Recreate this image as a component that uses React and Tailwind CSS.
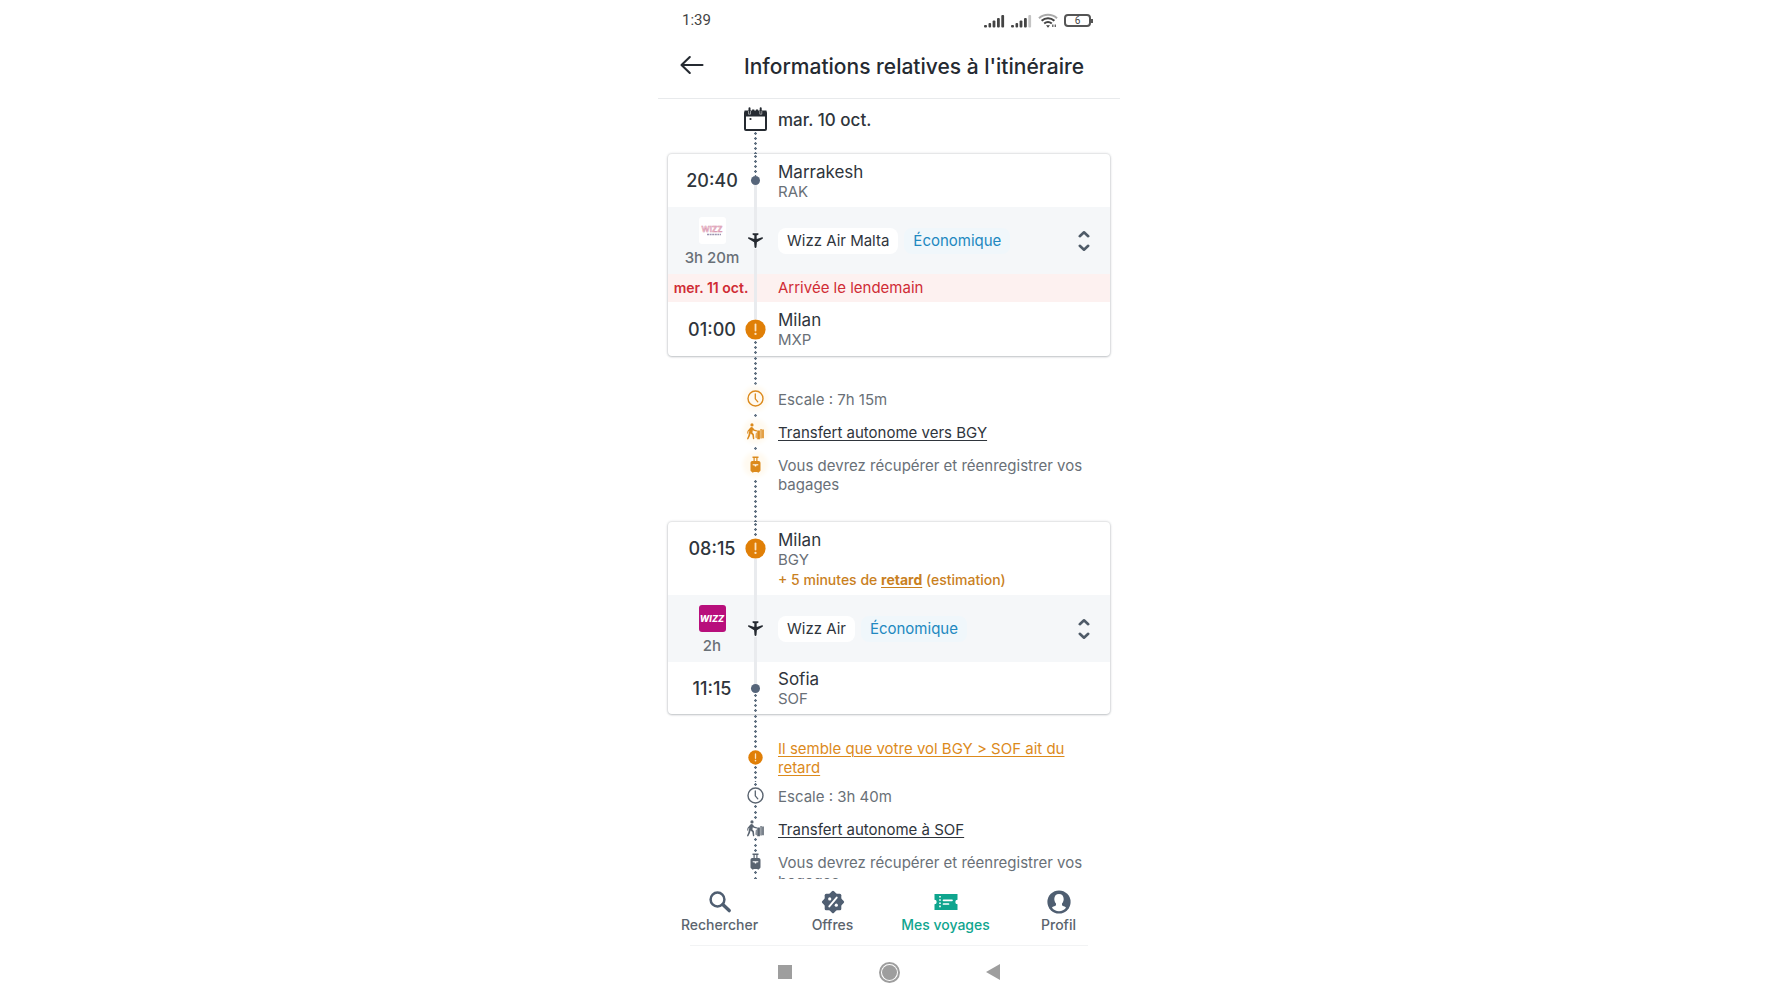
import React from 'react'
import clsx from 'clsx'

// Icons

const SignalIcon = ({ weak = false }) => (
  <svg className="h-3.5 w-[21px]" viewBox="0 0 21 14" fill="#444" aria-hidden="true">
    <rect x="0" y="11" width="3" height="2.5" rx="1" />
    <rect x="4.5" y="9" width="2.6" height="4.5" rx="1" />
    <rect x="8.6" y="6.5" width="2.8" height="7" rx="1" />
    <rect x="13" y="4" width="2.8" height="9.5" rx="1" />
    <rect x="17.3" y="1" width="2.8" height="12.5" rx="1" fill={weak ? '#c4c4c4' : '#444'} />
  </svg>
)

const WifiIcon = () => (
  <svg className="h-4 w-5" viewBox="0 0 20 16" fill="none" strokeWidth="2" aria-hidden="true">
    <path d="M1 5.2C6 .6 14 .6 19 5.2" stroke="#aaa" />
    <path d="M3.6 7.8c3.8-3.4 9-3.4 12.8 0" stroke="#444" />
    <path d="M6.2 10.5c2.4-2 5.2-2 7.6 0" stroke="#444" />
    <path d="M8 12.2h4l-2 2.6z" fill="#444" />
    <path d="M14.8 11.5v2.6M17.3 11.5v2.6" stroke="#666" strokeWidth="1.4" />
  </svg>
)

const BackIcon = () => (
  <svg className="h-5 w-6" viewBox="0 0 24 20" fill="none" stroke="#252a31" strokeWidth="2.1" strokeLinecap="round" strokeLinejoin="round" aria-hidden="true">
    <path d="M22.5 10H1.8M9.8 2L1.5 10l8.3 8" />
  </svg>
)

const CalendarIcon = () => (
  <svg className="h-6 w-[23px] shrink-0" viewBox="0 0 23 24" aria-hidden="true">
    <rect x="1" y="5" width="21" height="18" rx="1" fill="none" stroke="#252a31" strokeWidth="2" />
    <path d="M.5 3.5h4V1.2a1 1 0 0 1 2 0v2.3h1.6v-1h2.2v1h1.6v-1h2.2v1h1.6V1.2a1 1 0 0 1 2 0v2.3H22.5v6H.5z" fill="#252a31" />
    <path d="M4.5 4v3.2h2V4M15.8 4v3.2h2V4" fill="none" stroke="#fff" strokeWidth=".5" />
    <circle cx="6.5" cy="12" r="1.1" fill="#252a31" />
  </svg>
)

const PlaneIcon = () => (
  <svg className="size-[17px] shrink-0" viewBox="0 0 17 17" fill="#252a31" aria-hidden="true">
    <path d="M5.6 1.3h5.8v1.5l-1.8.7.2 3.6 5.3-1.8c.9-.2 1.2 1 .5 1.5L9.9 10.300l-.4 4.700c-.2 1.200-1.800 1.200-2 0l-.4-4.700L1.400 6.800c-.7-.5-.4-1.700.5-1.500l5.300 1.800.2-3.600-1.800-.7z" />
  </svg>
)

const AlertIcon = ({ small = false }) => (
  <svg className={clsx('shrink-0', small ? 'size-[15px]' : 'size-[21px]')} viewBox="0 0 20 20" aria-hidden="true">
    <circle cx="10" cy="10" r="9.6" fill="#e07f07" />
    <path d="M10 5.2V11" stroke="#fbe3c0" strokeWidth="1.7" strokeLinecap="round" />
    <circle cx="10" cy="14.2" r="1.1" fill="#fbe3c0" />
  </svg>
)

const ClockIcon = () => (
  <svg className="size-[17px] shrink-0" viewBox="0 0 17 17" fill="none" stroke="currentColor" aria-hidden="true">
    <circle cx="8.5" cy="8.5" r="7.5" strokeWidth="1.4" />
    <path d="M8.3 4v4.8l2.5 3" strokeWidth="1.3" strokeLinecap="round" strokeLinejoin="round" />
  </svg>
)

const TransferIcon = () => (
  <svg className="size-[17px] shrink-0" viewBox="0 0 17 17" fill="currentColor" aria-hidden="true">
    <circle cx="5" cy="1.9" r="1.6" />
    <path d="M3.4 4.6c.8-.8 2-.7 2.6.2L7.300 6.600l2.400.6c.8.2.6 1.400-.3 1.300L6.500 7.800l-.6-.8-.5 2.500 1.500 1.700.4 4.400c0 .9-1.200 1-1.400.2l-.6-3.700-1.700-1.600-.7 2.600-1.500 3c-.5.7-1.600.1-1.300-.7l1.300-3.100.9-4.500-.8.7-.3 1.800c-.2.600-1.100.5-1-.2L.5 7.900z" />
    <path d="M8.800 10.200l.9-1v6.400l-1.200-1zM10.200 7.400h2.700v8.800h-2.700zM13.400 6h1.300v9.600h-1.300zM15.200 6.500h1.600v8.800h-1.600z" />
  </svg>
)

const LuggageIcon = () => (
  <svg className="size-[17px] shrink-0" viewBox="0 0 17 17" fill="currentColor" aria-hidden="true">
    <path d="M5.500.5h6v1.400h-1v3.600H9.300V1.900H7.700v3.600H6.500V1.900h-1z" />
    <path fillRule="evenodd" d="M5.300 5h6.400c1.100 0 1.800.8 1.800 1.900v7c0 1-.6 1.800-1.500 1.900v.7h-1.500v-.6h-4v.6H5v-.7c-.9-.1-1.500-.9-1.500-1.900v-7C3.500 5.800 4.200 5 5.300 5zm.4 3.200v1.100l2.100.3v.9h1.400v-.9l2.100-.3V8.200z" />
  </svg>
)

const ExpandIcon = () => (
  <svg className="h-[22px] w-3" viewBox="0 0 12 22" fill="none" stroke="#4f5b68" strokeWidth="2.6" strokeLinecap="round" strokeLinejoin="round" aria-hidden="true">
    <path d="M1.800 6.200L6 2.300l4.200 3.900M1.800 15.800L6 19.700l4.200-3.900" />
  </svg>
)

const SearchIcon = () => (
  <svg className="size-6" viewBox="0 0 24 24" fill="none" stroke="#4f5e71" aria-hidden="true">
    <circle cx="9.500" cy="9.500" r="6.900" strokeWidth="2.5" />
    <path d="M14.800 14.600l6.400 6" strokeWidth="3.400" strokeLinecap="round" />
  </svg>
)

const DealsIcon = () => (
  <svg className="size-6" viewBox="0 0 24 24" aria-hidden="true">
    <g fill="#4f5e71">
      <rect x="3.700" y="3.700" width="16.600" height="16.600" rx="1.500" />
      <rect x="3.700" y="3.700" width="16.600" height="16.600" rx="1.500" transform="rotate(45 12 12)" />
    </g>
    <path d="M15.700 7.600l-7.400 8.800" stroke="#fff" strokeWidth="1.900" strokeLinecap="round" />
    <circle cx="8.700" cy="8.900" r="1.600" fill="#fff" />
    <circle cx="15.300" cy="15.200" r="1.600" fill="#fff" />
  </svg>
)

const TicketIcon = () => (
  <svg className="size-6" viewBox="0 0 24 24" aria-hidden="true">
    <path d="M.5 4h23v5.800a2.200 2.200 0 0 0 0 4.400V20H.5v-5.800a2.200 2.200 0 0 0 0-4.400z" fill="#0fa58e" />
    <path d="M6 6v12.500" stroke="#fff" strokeWidth="1.600" strokeDasharray="1.600 1.600" />
    <path d="M9.500 10.300H18M9.500 14h5" stroke="#fff" strokeWidth="1.700" strokeLinecap="round" />
  </svg>
)

const ProfileIcon = () => (
  <svg className="size-6" viewBox="0 0 24 24" aria-hidden="true">
    <circle cx="12" cy="12" r="11.600" fill="#4f5e71" />
    <path d="M12 4c2.900 0 4.700 2 4.700 4.900 0 1.900-.7 3.500-1.700 4.600v1.600c0 1 3.300 1.300 4 2.700-1.700 2.400-4.200 3.400-7 3.400s-5.300-1-7-3.400c.7-1.400 4-1.700 4-2.700v-1.600c-1-1.100-1.700-2.700-1.700-4.600C7.300 6 9.100 4 12 4z" fill="#fff" />
  </svg>
)

const WizzLogo = () => (
  <svg className="size-[27px]" viewBox="0 0 27 27" role="img" aria-label="Wizz Air">
    <rect width="27" height="27" rx="3" fill="#b80f7c" />
    <text x="13" y="17" textAnchor="middle" fontFamily="Inter, sans-serif" fontSize="9" fontWeight="800" fontStyle="italic" fill="#fff">
      WIZZ
    </text>
  </svg>
)

const WizzMaltaLogo = () => (
  <svg className="size-[27px]" viewBox="0 0 27 27" role="img" aria-label="Wizz Air Malta">
    <rect width="27" height="27" rx="3" fill="#fff" />
    <text x="13" y="15" textAnchor="middle" fontFamily="Inter, sans-serif" fontSize="8" fontWeight="600" fill="#fbe9f0" stroke="#d58ba6" strokeWidth=".5">
      WIZZ
    </text>
    <path d="M8 17.500h14" stroke="#9a94b0" strokeWidth="1.300" strokeDasharray="2 .6" />
  </svg>
)

// Timeline parts

const LINES = {
  dotted: 'w-[3px] bg-[radial-gradient(circle,#5f6f80_1px,transparent_1.5px)] bg-[length:3px_5px]',
  solid: 'w-[3px] bg-[#e9ebee]',
  none: 'w-[3px]',
}

const Line = ({ type, className = 'flex-1' }) => <div className={clsx(LINES[type], className)} />

const Dot = () => <span className="size-[9px] shrink-0 rounded-full bg-[#56657a]" />

const Row = ({ left, marker, children, className }) => (
  <div className={clsx('flex', className)}>
    <div className="flex w-[86px] shrink-0 flex-col items-center justify-center whitespace-nowrap">{left}</div>
    <div className="flex w-[3px] shrink-0 flex-col items-center">{marker}</div>
    <div className="min-w-0 flex-1 pl-[21px]">{children}</div>
  </div>
)

const Time = ({ children }) => (
  <time className="pt-px pl-0.5 text-[18px] leading-6 font-medium text-[#2f353c]">{children}</time>
)

const Place = ({ city, code }) => (
  <>
    <div className="text-[17px] leading-5 text-[#2f353c]">{city}</div>
    <div className="text-[15px] leading-5 text-[#697077]">{code}</div>
  </>
)

const FlightRow = ({ logo, duration, carrier }) => (
  <Row
    className="h-[67px] bg-[#f5f7f9]"
    left={
      <div className="flex flex-col items-center gap-1 pt-1 pl-0.5">
        {logo}
        <div className="text-[15px] leading-5 font-medium text-[#697077]">{duration}</div>
      </div>
    }
    marker={
      <>
        <Line type="solid" />
        <PlaneIcon />
        <Line type="solid" />
      </>
    }
  >
    <div className="flex h-full items-center gap-1.5 pr-5">
      <span className="rounded-lg bg-white px-[9px] py-[3px] text-[15px] leading-5 text-[#2f353c]">{carrier}</span>
      <span className="rounded-lg bg-[#f0f7fb] px-[9px] py-[3px] text-[15px] leading-5 text-[#2188c0]">Économique</span>
      <button type="button" aria-label="Afficher les détails du vol" className="ml-auto cursor-pointer">
        <ExpandIcon />
      </button>
    </div>
  </Row>
)

const Card = ({ children }) => (
  <section className="mx-2.5 overflow-hidden rounded bg-white shadow-[0_0_2px_1px_rgba(60,70,80,0.16),0_1px_2px_rgba(60,70,80,0.2)]">
    {children}
  </section>
)

const LayoverRow = ({ icon, highlighted = false, last = false, children }) => {
  const gap = highlighted ? 'none' : 'dotted'

  return (
    <Row
      className={clsx('mx-2.5', last ? 'min-h-[71px]' : 'min-h-[33px]')}
      marker={
        <>
          <Line type={gap} className="h-[5px]" />
          <span
            className={clsx(
              'shrink-0 rounded-full',
              highlighted ? 'bg-[#fffaf0] text-[#dc8a1c] shadow-[0_0_4px_4px_#fffaf0]' : 'text-[#5a6470]'
            )}
          >
            {icon}
          </span>
          <Line type={gap} className="h-1.5" />
          <Line type="dotted" />
        </>
      }
    >
      <div className="pt-[5px] pr-6 text-[15px] leading-[19px] text-[#697077]">{children}</div>
    </Row>
  )
}

const TextLink = ({ children, className }) => (
  <a href="#" className={clsx('underline decoration-1 underline-offset-2', className)}>
    {children}
  </a>
)

const NAV_ITEMS = [
  { label: 'Rechercher', icon: SearchIcon },
  { label: 'Offres', icon: DealsIcon },
  { label: 'Mes voyages', icon: TicketIcon, active: true },
  { label: 'Profil', icon: ProfileIcon },
]

const App = () => {
  return (
    <div className="min-h-screen bg-white font-['Inter','Liberation_Sans',sans-serif]">
      <div className="mx-auto flex h-screen max-w-[462px] flex-col">
        {/* Status bar */}
        <div className="flex h-[41px] shrink-0 items-center justify-between pr-[27px] pl-6">
          <span className="font-['Roboto',sans-serif] text-[15px] text-[#444]">1:39</span>
          <div className="flex items-center gap-1.5">
            <SignalIcon />
            <SignalIcon weak />
            <WifiIcon />
            <div className="flex items-center">
              <span className="flex h-[13px] w-[27px] items-center justify-center rounded border-2 border-[#555] font-['Roboto',sans-serif] text-[10px] leading-none text-[#444]">
                6
              </span>
              <span className="h-1 w-0.5 bg-[#555]" />
            </div>
          </div>
        </div>

        {/* Header */}
        <header className="flex h-[58px] shrink-0 items-start border-b border-[#e8eaec] pt-3 pl-[22px]">
          <button type="button" aria-label="Retour" className="mt-0.5 cursor-pointer">
            <BackIcon />
          </button>
          <h1 className="ml-10 text-[21px] leading-7 font-medium whitespace-nowrap text-[#252a31]">
            Informations relatives à l'itinéraire
          </h1>
        </header>

        <main className="min-h-0 flex-1 overflow-hidden">
          <Row
            className="mx-2.5 h-[55px]"
            marker={
              <>
                <Line type="none" className="h-2 shrink-0" />
                <CalendarIcon />
                <Line type="dotted" />
              </>
            }
          >
            <h2 className="pt-[9px] text-[17px] leading-6 font-medium text-[#2f353c]">mar. 10 oct.</h2>
          </Row>

          <Card>
            <Row
              className="h-[53px]"
              left={<Time>20:40</Time>}
              marker={
                <>
                  <Line type="dotted" />
                  <Dot />
                  <Line type="solid" />
                </>
              }
            >
              <div className="pt-2">
                <Place city="Marrakesh" code="RAK" />
              </div>
            </Row>
            <FlightRow logo={<WizzMaltaLogo />} duration="3h 20m" carrier="Wizz Air Malta" />
            <Row
              className="bg-[#fdf1f0] text-[#d02c35]"
              left={<span className="text-[14px] leading-7 font-semibold">mer. 11 oct.</span>}
              marker={<Line type="solid" />}
            >
              <div className="text-[15px] leading-7">Arrivée le lendemain</div>
            </Row>
            <Row
              className="h-[54px]"
              left={<Time>01:00</Time>}
              marker={
                <>
                  <Line type="solid" />
                  <AlertIcon />
                  <Line type="dotted" />
                </>
              }
            >
              <div className="pt-2">
                <Place city="Milan" code="MXP" />
              </div>
            </Row>
          </Card>

          <Row className="mx-2.5 h-[29px]" marker={<Line type="dotted" />} />
          <LayoverRow highlighted icon={<ClockIcon />}>
            Escale : 7h 15m
          </LayoverRow>
          <LayoverRow highlighted icon={<TransferIcon />}>
            <TextLink className="text-[#2f353c]">Transfert autonome vers BGY</TextLink>
          </LayoverRow>
          <LayoverRow highlighted last icon={<LuggageIcon />}>
            Vous devrez récupérer et réenregistrer vos bagages
          </LayoverRow>

          <Card>
            <Row
              className="h-[73px]"
              left={
                <div className="mb-[19px]">
                  <Time>08:15</Time>
                </div>
              }
              marker={
                <>
                  <Line type="dotted" className="h-4" />
                  <AlertIcon />
                  <Line type="solid" />
                </>
              }
            >
              <div className="pt-2">
                <Place city="Milan" code="BGY" />
                <p className="text-[14px] leading-5 font-medium text-[#c9801e]">
                  + 5 minutes de <TextLink className="font-bold">retard</TextLink> (estimation)
                </p>
              </div>
            </Row>
            <FlightRow logo={<WizzLogo />} duration="2h" carrier="Wizz Air" />
            <Row
              className="h-[52px]"
              left={<Time>11:15</Time>}
              marker={
                <>
                  <Line type="solid" />
                  <Dot />
                  <Line type="dotted" />
                </>
              }
            >
              <div className="pt-[7px]">
                <Place city="Sofia" code="SOF" />
              </div>
            </Row>
          </Card>

          <Row
            className="mx-2.5 h-[68px]"
            marker={
              <>
                <Line type="dotted" className="h-9" />
                <AlertIcon small />
                <Line type="dotted" />
              </>
            }
          >
            <p className="pt-[25px] pr-6 text-[15px] leading-[19px] text-[#dc8a1c]">
              <TextLink>Il semble que votre vol BGY &gt; SOF ait du retard</TextLink>
            </p>
          </Row>
          <LayoverRow icon={<ClockIcon />}>Escale : 3h 40m</LayoverRow>
          <LayoverRow icon={<TransferIcon />}>
            <TextLink className="text-[#2f353c]">Transfert autonome à SOF</TextLink>
          </LayoverRow>
          <LayoverRow last icon={<LuggageIcon />}>
            Vous devrez récupérer et réenregistrer vos bagages
          </LayoverRow>
        </main>

        {/* Bottom navigation */}
        <nav className="grid shrink-0 grid-cols-4 px-[5px] pt-[11px] pb-2.5">
          {NAV_ITEMS.map(({ label, icon: Icon, active }) => (
            <a
              key={label}
              href="#"
              aria-current={active ? 'page' : undefined}
              className={clsx(
                'flex flex-col items-center gap-px text-[14px] leading-5 font-medium whitespace-nowrap',
                active ? 'text-[#0fa58e]' : 'text-[#5b646e]'
              )}
            >
              <Icon />
              {label}
            </a>
          ))}
        </nav>

        {/* System buttons */}
        <div className="mx-8 flex h-[55px] shrink-0 items-center justify-between border-t border-[#f2f3f4] px-[88px] pb-0.5">
          <button type="button" aria-label="Applications récentes" className="size-3.5 bg-[#9e9e9e]" />
          <button type="button" aria-label="Accueil" className="flex size-[21px] items-center justify-center rounded-full border-2 border-[#9e9e9e]">
            <span className="size-[15px] rounded-full bg-[#9e9e9e]" />
          </button>
          <button type="button" aria-label="Précédent">
            <svg className="h-4 w-3.5" viewBox="0 0 14 16" fill="#9e9e9e" aria-hidden="true">
              <path d="M14 0v16L0 8z" />
            </svg>
          </button>
        </div>
      </div>
    </div>
  )
}

export default App
